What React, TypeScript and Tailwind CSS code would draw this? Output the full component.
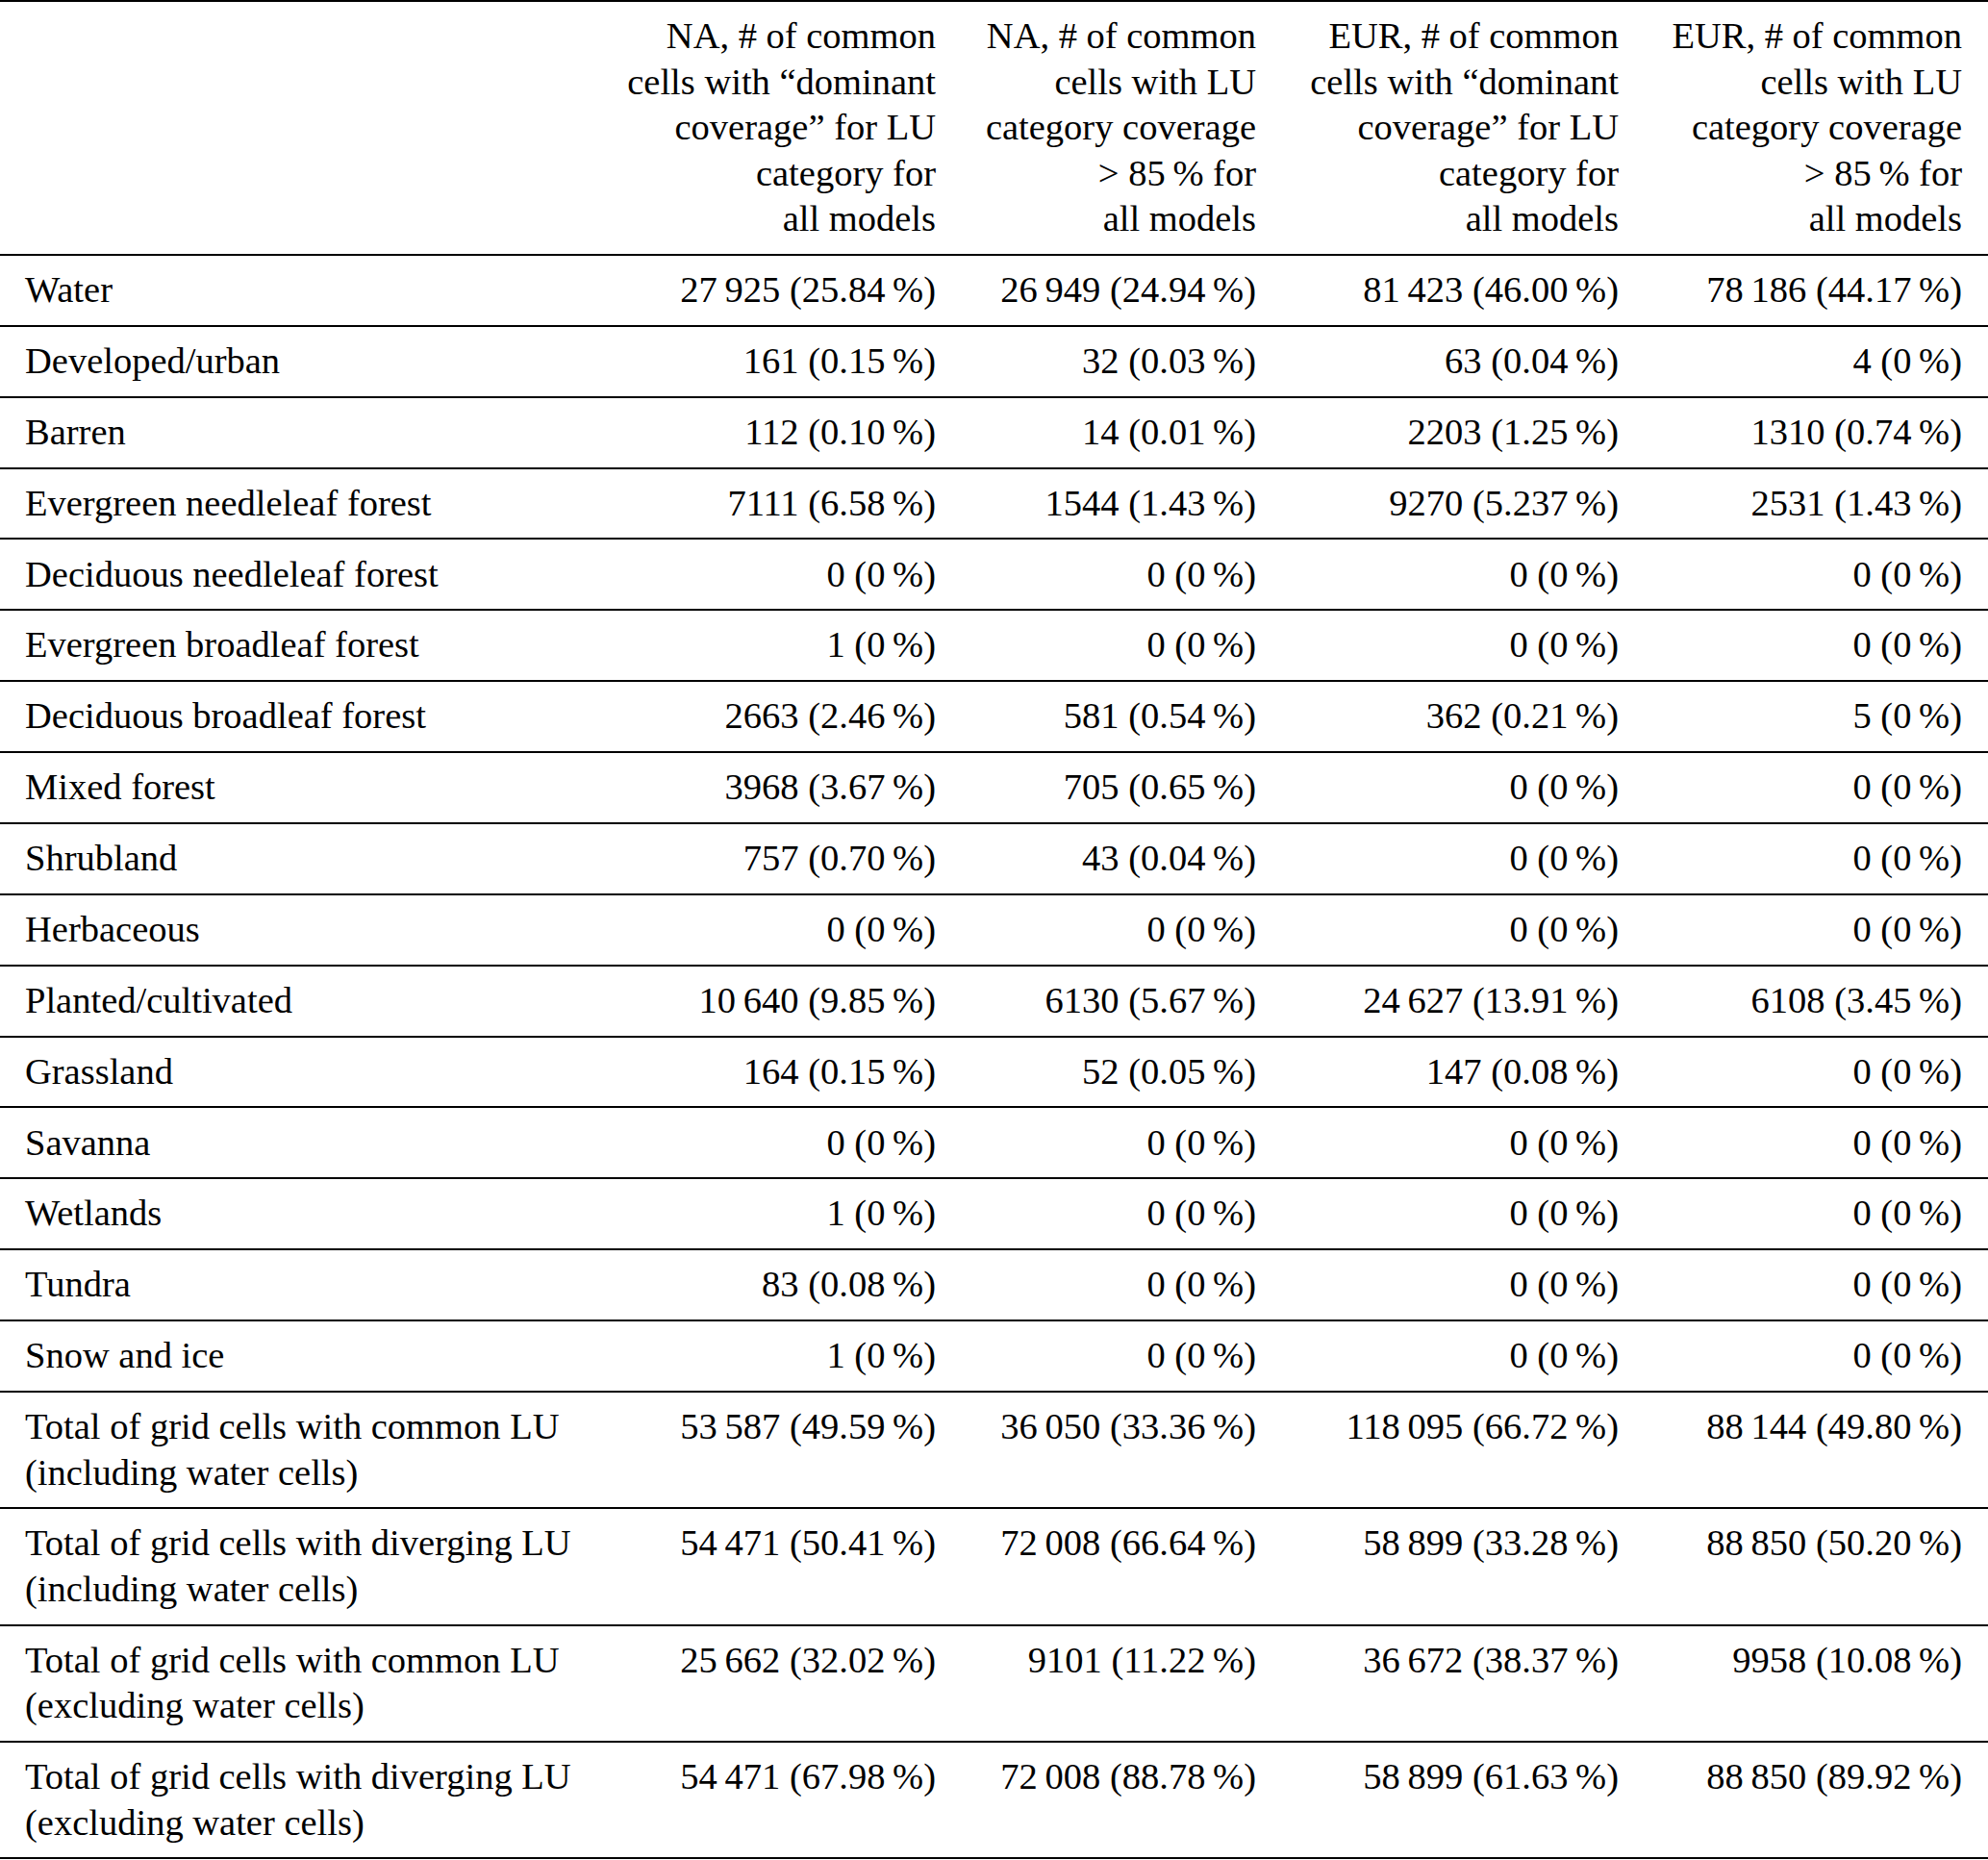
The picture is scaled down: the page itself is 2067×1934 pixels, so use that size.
const headers = [
  ["NA, # of common", "cells with “dominant", "coverage” for LU", "category for", "all models"],
  ["NA, # of common", "cells with LU", "category coverage", "> 85\u2009% for", "all models"],
  ["EUR, # of common", "cells with “dominant", "coverage” for LU", "category for", "all models"],
  ["EUR, # of common", "cells with LU", "category coverage", "> 85\u2009% for", "all models"],
];

const t = "\u2009";

const rows: [string[], string[]][] = [
  [["Water"], [`27${t}925 (25.84${t}%)`, `26${t}949 (24.94${t}%)`, `81${t}423 (46.00${t}%)`, `78${t}186 (44.17${t}%)`]],
  [["Developed/urban"], [`161 (0.15${t}%)`, `32 (0.03${t}%)`, `63 (0.04${t}%)`, `4 (0${t}%)`]],
  [["Barren"], [`112 (0.10${t}%)`, `14 (0.01${t}%)`, `2203 (1.25${t}%)`, `1310 (0.74${t}%)`]],
  [["Evergreen needleleaf forest"], [`7111 (6.58${t}%)`, `1544 (1.43${t}%)`, `9270 (5.237${t}%)`, `2531 (1.43${t}%)`]],
  [["Deciduous needleleaf forest"], [`0 (0${t}%)`, `0 (0${t}%)`, `0 (0${t}%)`, `0 (0${t}%)`]],
  [["Evergreen broadleaf forest"], [`1 (0${t}%)`, `0 (0${t}%)`, `0 (0${t}%)`, `0 (0${t}%)`]],
  [["Deciduous broadleaf forest"], [`2663 (2.46${t}%)`, `581 (0.54${t}%)`, `362 (0.21${t}%)`, `5 (0${t}%)`]],
  [["Mixed forest"], [`3968 (3.67${t}%)`, `705 (0.65${t}%)`, `0 (0${t}%)`, `0 (0${t}%)`]],
  [["Shrubland"], [`757 (0.70${t}%)`, `43 (0.04${t}%)`, `0 (0${t}%)`, `0 (0${t}%)`]],
  [["Herbaceous"], [`0 (0${t}%)`, `0 (0${t}%)`, `0 (0${t}%)`, `0 (0${t}%)`]],
  [["Planted/cultivated"], [`10${t}640 (9.85${t}%)`, `6130 (5.67${t}%)`, `24${t}627 (13.91${t}%)`, `6108 (3.45${t}%)`]],
  [["Grassland"], [`164 (0.15${t}%)`, `52 (0.05${t}%)`, `147 (0.08${t}%)`, `0 (0${t}%)`]],
  [["Savanna"], [`0 (0${t}%)`, `0 (0${t}%)`, `0 (0${t}%)`, `0 (0${t}%)`]],
  [["Wetlands"], [`1 (0${t}%)`, `0 (0${t}%)`, `0 (0${t}%)`, `0 (0${t}%)`]],
  [["Tundra"], [`83 (0.08${t}%)`, `0 (0${t}%)`, `0 (0${t}%)`, `0 (0${t}%)`]],
  [["Snow and ice"], [`1 (0${t}%)`, `0 (0${t}%)`, `0 (0${t}%)`, `0 (0${t}%)`]],
  [
    ["Total of grid cells with common LU", "(including water cells)"],
    [`53${t}587 (49.59${t}%)`, `36${t}050 (33.36${t}%)`, `118${t}095 (66.72${t}%)`, `88${t}144 (49.80${t}%)`],
  ],
  [
    ["Total of grid cells with diverging LU", "(including water cells)"],
    [`54${t}471 (50.41${t}%)`, `72${t}008 (66.64${t}%)`, `58${t}899 (33.28${t}%)`, `88${t}850 (50.20${t}%)`],
  ],
  [
    ["Total of grid cells with common LU", "(excluding water cells)"],
    [`25${t}662 (32.02${t}%)`, `9101 (11.22${t}%)`, `36${t}672 (38.37${t}%)`, `9958 (10.08${t}%)`],
  ],
  [
    ["Total of grid cells with diverging LU", "(excluding water cells)"],
    [`54${t}471 (67.98${t}%)`, `72${t}008 (88.78${t}%)`, `58${t}899 (61.63${t}%)`, `88${t}850 (89.92${t}%)`],
  ],
];

export default function App() {
  return (
    <div className="min-h-screen w-[2067px] bg-white text-black font-['Liberation_Serif','Times_New_Roman',serif] text-[38.5px] leading-[47.5px]">
      <div className="border-t-2 border-black">
        {/* Header */}
        <div className="grid grid-cols-[622px_378px_333px_377px_357px] border-b-2 border-black">
          <div className="py-[12.2px] pl-[26px]" />
          {headers.map((lines, i) => (
            <div key={i} className="py-[12.2px] pr-[27px] text-right">
              {lines.map((line, j) => (
                <div key={j} className="whitespace-nowrap">
                  {line}
                </div>
              ))}
            </div>
          ))}
        </div>

        {/* Body */}
        {rows.map(([label, values], i) => (
          <div
            key={i}
            className="grid grid-cols-[622px_378px_333px_377px_357px] border-b-2 border-black"
          >
            <div className="py-[12.2px] pl-[26px]">
              {label.map((line, j) => (
                <div key={j} className="whitespace-nowrap">
                  {line}
                </div>
              ))}
            </div>
            {values.map((v, j) => (
              <div key={j} className="py-[12.2px] pr-[27px] text-right whitespace-nowrap">
                {v}
              </div>
            ))}
          </div>
        ))}
      </div>
    </div>
  );
}
